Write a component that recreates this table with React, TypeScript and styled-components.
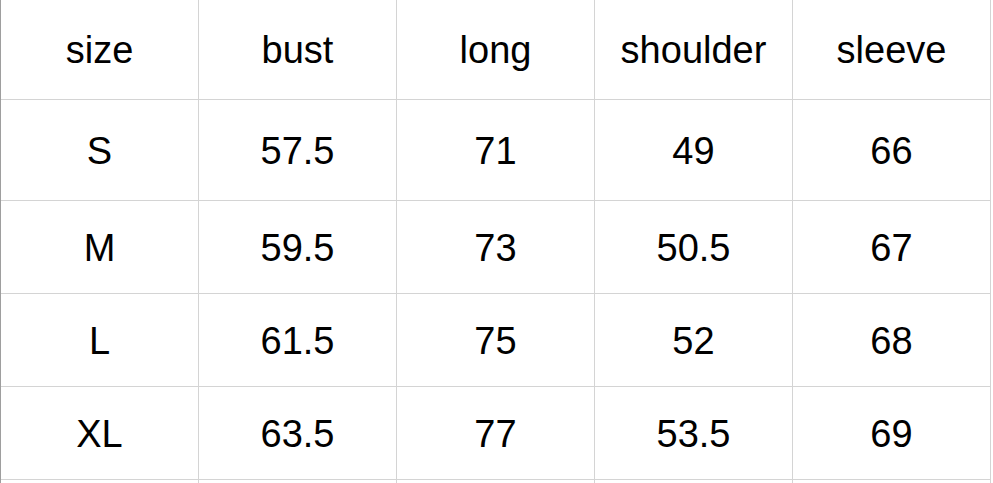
import React from "react";
import styled, { createGlobalStyle } from "styled-components";

const Global = createGlobalStyle`
  html, body { margin: 0; padding: 0; background: #ffffff; }
  body { font-family: "Liberation Sans", Arial, sans-serif; overflow: hidden; }
`;

const Sheet = styled.div`
  display: flex;
  flex-direction: column;
  width: 991px;
  border-left: 1px solid #9e9e9e;
  box-sizing: border-box;
`;

const Row = styled.div<{ $h: number }>`
  display: grid;
  grid-template-columns: repeat(5, 198px);
  height: ${(p) => p.$h}px;
`;

const Cell = styled.div<{ $noBottom?: boolean }>`
  display: flex;
  align-items: center;
  justify-content: center;
  box-sizing: border-box;
  padding-top: 3px;
  border-right: 1px solid #d4d4d4;
  border-bottom: ${(p) => (p.$noBottom ? "none" : "1px solid #d4d4d4")};
  font-size: 38px;
  color: #000000;
  line-height: 1.15;
`;

const header = ["size", "bust", "long", "shoulder", "sleeve"];
const rows: { h: number; cells: string[] }[] = [
  { h: 101, cells: ["S", "57.5", "71", "49", "66"] },
  { h: 93, cells: ["M", "59.5", "73", "50.5", "67"] },
  { h: 93, cells: ["L", "61.5", "75", "52", "68"] },
  { h: 93, cells: ["XL", "63.5", "77", "53.5", "69"] },
];

export default function App() {
  return (
    <>
      <Global />
      <Sheet>
        <Row $h={100}>
          {header.map((t) => (
            <Cell key={t}>{t}</Cell>
          ))}
        </Row>
        {rows.map((r) => (
          <Row key={r.cells[0]} $h={r.h}>
            {r.cells.map((c, i) => (
              <Cell key={i}>{c}</Cell>
            ))}
          </Row>
        ))}
        <Row $h={4}>
          {header.map((t) => (
            <Cell key={t} $noBottom />
          ))}
        </Row>
      </Sheet>
    </>
  );
}
